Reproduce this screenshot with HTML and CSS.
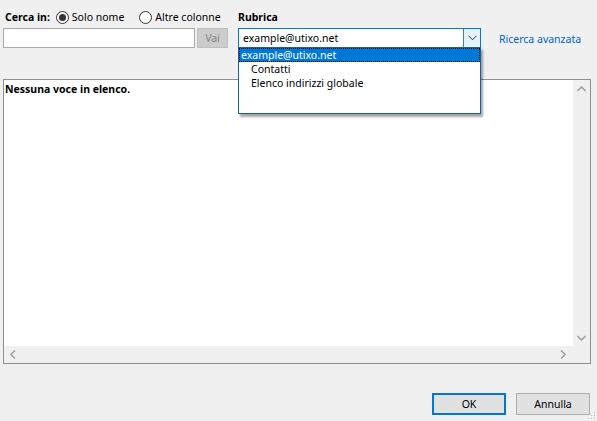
FILE: index.html
```html
<!DOCTYPE html>
<html lang="it">
<head>
<meta charset="utf-8">
<title>Rubrica</title>
<link rel="stylesheet" href="styles.css">
</head>
<body>
<div class="dialog">
  <div class="top">
    <div class="search-col">
      <div class="row1">
        <span class="lbl">Cerca in:</span>
        <span class="radio first">
          <svg width="13" height="13" viewBox="0 0 13 13"><circle cx="6.5" cy="6.5" r="6" fill="#fff" stroke="#333" stroke-width="1"/><circle cx="6.5" cy="6.5" r="3.5" fill="#333"/></svg>
          Solo nome
        </span>
        <span class="radio">
          <svg width="13" height="13" viewBox="0 0 13 13"><circle cx="6.5" cy="6.5" r="6" fill="#fff" stroke="#333" stroke-width="1"/></svg>
          Altre colonne
        </span>
      </div>
      <div class="row2">
        <div class="input"></div>
        <div class="vai">Vai</div>
      </div>
    </div>
    <div class="book-col">
      <div class="row1"><span class="lbl">Rubrica</span></div>
      <div class="combo-wrap">
        <div class="combo">
          <span class="combo-text">example@utixo.net</span>
          <span class="combo-arrow">
            <svg width="9" height="6" viewBox="0 0 9 6"><path d="M0.5 0.8 L4.5 4.8 L8.5 0.8" fill="none" stroke="#333" stroke-width="1"/></svg>
          </span>
        </div>
        <div class="dropdown">
          <div class="opt sel">example@utixo.net</div>
          <div class="opt">Contatti</div>
          <div class="opt">Elenco indirizzi globale</div>
        </div>
      </div>
    </div>
    <div class="adv-col">
      <span class="adv">Ricerca avanzata</span>
    </div>
  </div>

  <div class="list">
    <div class="list-body"><span class="empty">Nessuna voce in elenco.</span></div>
    <div class="vscroll">
      <svg width="9" height="6" viewBox="0 0 9 6"><path d="M0.5 5 L4.5 1 L8.5 5" fill="none" stroke="#a3a3a3" stroke-width="1.6"/></svg>
      <svg width="9" height="6" viewBox="0 0 9 6"><path d="M0.5 1 L4.5 5 L8.5 1" fill="none" stroke="#a3a3a3" stroke-width="1.6"/></svg>
    </div>
    <div class="hscroll">
      <svg width="6" height="9" viewBox="0 0 6 9"><path d="M5 0.5 L1 4.5 L5 8.5" fill="none" stroke="#a3a3a3" stroke-width="1.6"/></svg>
      <svg width="6" height="9" viewBox="0 0 6 9"><path d="M1 0.5 L5 4.5 L1 8.5" fill="none" stroke="#a3a3a3" stroke-width="1.6"/></svg>
    </div>
    <div class="corner"></div>
  </div>

  <div class="footer">
    <div class="btn ok">OK</div>
    <div class="btn">Annulla</div>
  </div>
  <svg class="grip" width="8" height="8" viewBox="0 0 8 8">
    <rect x="6" y="0" width="1" height="1" fill="#bcbcbc"/>
    <rect x="3" y="3" width="1" height="1" fill="#bcbcbc"/>
    <rect x="6" y="3" width="1" height="1" fill="#bcbcbc"/>
    <rect x="0" y="6" width="1" height="1" fill="#bcbcbc"/>
    <rect x="3" y="6" width="1" height="1" fill="#bcbcbc"/>
    <rect x="6" y="6" width="1" height="1" fill="#bcbcbc"/>
  </svg>
</div>
</body>
</html>
```

FILE: styles.css
```css
* { box-sizing: border-box; }
html, body {
  margin: 0;
  padding: 0;
  background: #f0f0f0;
}
body {
  font-family: "Noto Sans", "Open Sans", sans-serif;
  font-size: 10.5px;
  color: #000;
  width: 597px;
  height: 421px;
  overflow: hidden;
}
.dialog {
  position: relative;
  width: 597px;
  height: 421px;
  padding: 0 6px 0 3px;
  display: flex;
  flex-direction: column;
}
.top {
  display: flex;
  align-items: flex-start;
  height: 48px;
}
.row1 {
  height: 16px;
  margin-top: 9px;
  display: flex;
  align-items: center;
  white-space: nowrap;
}
.lbl {
  font-weight: bold;
}
.search-col .lbl {
  margin-left: 2px;
  margin-right: 6px;
}
.radio {
  display: inline-flex;
  align-items: center;
  gap: 3px;
}
.radio.first {
  margin-right: 15px;
}
.radio svg { display: block; }
.row2 {
  display: flex;
  margin-top: 3px;
  gap: 2px;
}
.input {
  width: 192px;
  height: 20px;
  background: #fff;
  border: 1px solid #a9a9a9;
}
.vai {
  width: 31px;
  height: 20px;
  background: #cccccc;
  border: 1px solid #bfbfbf;
  color: #838383;
  display: flex;
  align-items: center;
  justify-content: center;
}
.book-col {
  margin-left: 10px;
  width: 243px;
}
.combo-wrap {
  position: relative;
  margin-top: 3px;
}
.combo {
  height: 20px;
  background: #fff;
  border: 1px solid #0078d7;
  display: flex;
  align-items: center;
}
.combo-text {
  flex: 1;
  padding-left: 4px;
}
.combo-arrow {
  width: 17px;
  height: 18px;
  background: #e5f1fb;
  border-left: 1px solid #3c7fb1;
  display: flex;
  align-items: center;
  justify-content: center;
}
.combo-arrow svg { display: block; }
.dropdown {
  position: absolute;
  left: 0;
  top: 19px;
  width: 243px;
  height: 67px;
  background: #fff;
  border: 1px solid #1d5e9e;
  box-shadow: 2px 3px 2px rgba(0,0,0,0.35);
  z-index: 5;
}
.opt {
  height: 14px;
  line-height: 14px;
  padding-left: 12px;
  white-space: nowrap;
  font-size: 10.5px;
}
.opt.sel {
  background: #0078d7;
  color: #fff;
  padding-left: 2px;
  outline: 1px dotted #000;
  outline-offset: -1px;
}
.adv-col {
  margin-left: 18px;
  padding-top: 32px;
}
.adv {
  color: #0066cc;
}
.list {
  margin-top: 31px;
  height: 285px;
  border: 1px solid #8f8f8f;
  background: #fff;
  display: grid;
  grid-template-columns: 1fr 17px;
  grid-template-rows: 1fr 17px;
}
.list-body {
  padding: 2px 1px;
}
.empty {
  font-weight: bold;
}
.vscroll {
  background: #f0f0f0;
  display: flex;
  flex-direction: column;
  justify-content: space-between;
  align-items: center;
  padding: 6px 0 5px;
}
.vscroll svg, .hscroll svg { display: block; }
.hscroll {
  background: #f0f0f0;
  display: flex;
  justify-content: space-between;
  align-items: center;
  padding: 0 7px 0 6px;
}
.corner {
  background: #f0f0f0;
}
.footer {
  margin-top: 29px;
  display: flex;
  justify-content: flex-end;
  gap: 10px;
  padding-right: 1px;
}
.btn {
  width: 74px;
  height: 22px;
  background: #e1e1e1;
  border: 1px solid #adadad;
  display: flex;
  align-items: center;
  justify-content: center;
}
.btn.ok {
  border: 2px solid #0078d7;
}
.grip {
  position: absolute;
  right: 1px;
  bottom: 1px;
}
```
